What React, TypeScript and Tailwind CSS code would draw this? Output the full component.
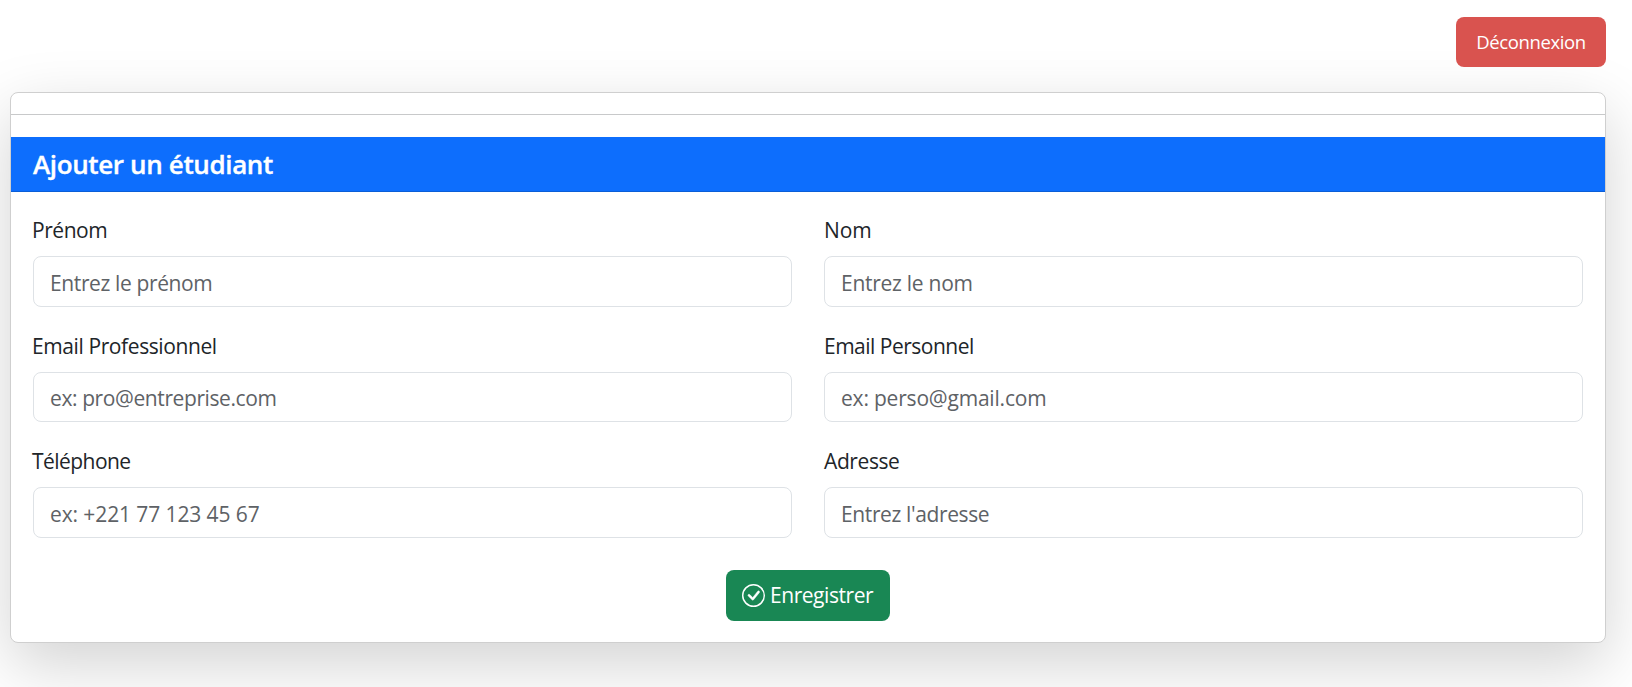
type FieldProps = {
  id: string;
  label: string;
  placeholder: string;
  type?: string;
  labelTracking: string;
  inputTracking: string;
  inputHeight: string;
};

const fields: FieldProps[] = [
  { id: "prenom", label: "Prénom", placeholder: "Entrez le prénom", labelTracking: "-ml-px tracking-[-0.45px]", inputTracking: "tracking-[-0.38px]", inputHeight: "h-[51px]" },
  { id: "nom", label: "Nom", placeholder: "Entrez le nom", labelTracking: "tracking-[-0.1px]", inputTracking: "tracking-[-0.27px]", inputHeight: "h-[51px]" },
  { id: "email-pro", label: "Email Professionnel", placeholder: "ex: pro@entreprise.com", type: "email", labelTracking: "-ml-px tracking-[-0.4px]", inputTracking: "tracking-[-0.4px]", inputHeight: "h-[50px]" },
  { id: "email-perso", label: "Email Personnel", placeholder: "ex: perso@gmail.com", type: "email", labelTracking: "tracking-[-0.5px]", inputTracking: "tracking-[-0.2px]", inputHeight: "h-[50px]" },
  { id: "telephone", label: "Téléphone", placeholder: "ex: +221 77 123 45 67", type: "tel", labelTracking: "-ml-px tracking-[-0.55px]", inputTracking: "tracking-[-0.1px]", inputHeight: "h-[51px]" },
  { id: "adresse", label: "Adresse", placeholder: "Entrez l'adresse", labelTracking: "tracking-[-0.4px]", inputTracking: "tracking-[-0.38px]", inputHeight: "h-[51px]" },
];

function Field({ id, label, placeholder, type = "text", labelTracking, inputTracking, inputHeight }: FieldProps) {
  return (
    <div className="flex flex-col">
      <label htmlFor={id} className={`mt-px mb-[9px] flex h-8 items-center whitespace-nowrap ${labelTracking}`}>
        {label}
      </label>
      <input
        id={id}
        type={type}
        placeholder={placeholder}
        className={`w-full rounded-lg border border-[#dee2e6] bg-white px-4 pt-0.5 outline-none placeholder:text-[#5e6266] ${inputHeight} ${inputTracking}`}
      />
    </div>
  );
}

function CheckCircle() {
  return (
    <svg viewBox="0 0 16 16" fill="currentColor" className="size-[23px] shrink-0" aria-hidden="true">
      <path d="M8 15A7 7 0 1 1 8 1a7 7 0 0 1 0 14m0 1A8 8 0 1 0 8 0a8 8 0 0 0 0 16" />
      <path stroke="currentColor" strokeWidth="0.3" d="m10.97 4.97-.02.022-3.473 4.425-2.093-2.094a.75.75 0 0 0-1.06 1.06L6.97 11.03a.75.75 0 0 0 1.079-.02l3.992-4.99a.75.75 0 0 0-1.071-1.05" />
    </svg>
  );
}

export default function App() {
  return (
    <div className="flex h-[687px] flex-col overflow-hidden bg-white pr-[26px] pl-[10px] font-['Open_Sans','Noto_Sans',sans-serif] text-[21px] text-[#212529]">
      <div className="flex justify-end pt-[17px] pb-[25px]">
        <button className="z-10 flex h-[50px] w-[150px] items-center justify-center rounded-lg bg-[#d9534f] text-[18.5px] tracking-[-0.4px] text-white">
          Déconnexion
        </button>
      </div>
      <main className="flex h-[551px] flex-col rounded-lg border border-[#cfcfcf] bg-white shadow-[0_21.5px_64px_rgba(0,0,0,0.175)]">
        <hr className="mt-[21px] mb-[22px] border-t border-[#c8c9ca]" />
        <h1 className="flex h-[55px] items-center border-b border-[#0b5ed7] bg-[#0d6efd] pl-[22px] text-[26px] font-semibold tracking-[-0.37px] text-white [-webkit-text-stroke:0.35px_white]">
          Ajouter un étudiant
        </h1>
        <form className="px-[22px] pt-[22px]">
          <div className="grid grid-cols-2 gap-x-8 gap-y-[23px]">
            {fields.map((field) => (
              <Field key={field.id} {...field} />
            ))}
          </div>
          <div className="mt-8 flex justify-center">
            <button type="button" className="flex h-[51px] w-[164px] items-center gap-[5px] rounded-lg bg-[#198754] pl-4 tracking-[-0.45px] text-white">
              <CheckCircle />
              Enregistrer
            </button>
          </div>
        </form>
      </main>
    </div>
  );
}
